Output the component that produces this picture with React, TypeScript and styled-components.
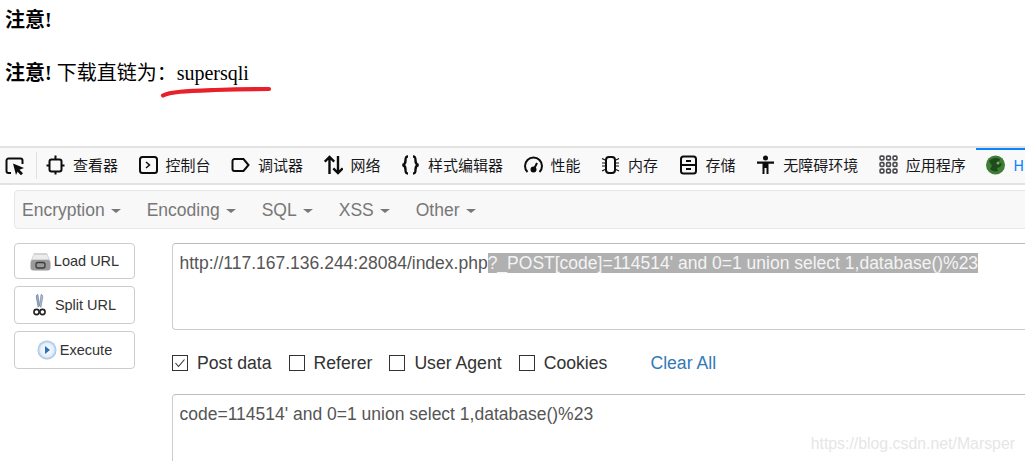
import React from 'react';
import styled, { createGlobalStyle } from 'styled-components';

const GlobalStyle = createGlobalStyle`
  html, body {
    margin: 0;
    padding: 0;
    background: #fff;
  }

  body {
    width: 1025px;
    height: 461px;
    overflow: hidden;
  }
`;

const Page = styled.div`
  position: relative;
  width: 1025px;
  height: 461px;
  overflow: hidden;
`;

const Notes = styled.div`
  height: 146px;
  box-sizing: border-box;
  padding: 7px 0 0 5px;
  font-family: 'Liberation Serif', 'Noto Sans CJK SC', serif;
  font-size: 20px;
  line-height: 26px;
  color: #000;
`;

const Note = styled.div`
  margin-bottom: 27px;
  white-space: nowrap;
`;

const Flag = styled.b`
  margin-right: 5px;
`;

const RedStroke = styled.svg`
  position: absolute;
  left: 158px;
  top: 84px;
`;

const Toolbar = styled.div`
  display: flex;
  align-items: stretch;
  height: 35px;
  border-top: 2px solid #e3e3e4;
  border-bottom: 2px solid #e3e3e4;
  background: #f9f9fa;
  font-family: 'Noto Sans CJK SC', 'Liberation Sans', sans-serif;
  font-size: 15px;
  color: #18181a;
  white-space: nowrap;
`;

const Picker = styled.div`
  display: flex;
  flex: none;
  align-items: center;
  width: 37px;
  padding-left: 5px;
  box-sizing: border-box;
  border-right: 1px solid #e0e0e2;
  margin: 4px 0;
`;

const Tabs = styled.div`
  display: flex;
  flex: none;
  gap: 20.5px;
  margin-left: 9px;
`;

const Tab = styled.div<{ $active?: boolean }>`
  display: flex;
  align-items: center;
  gap: 8px;
  padding-bottom: 1px;
  line-height: 20px;
  color: ${(p) => (p.$active ? '#0a84ff' : '#18181a')};
  position: relative;

  ${(p) =>
    p.$active &&
    `
    &::before {
      content: '';
      position: absolute;
      left: -10px;
      right: -30px;
      top: 0;
      height: 2px;
      background: #0a84ff;
    }
  `}
`;

const TabIcon = styled.svg`
  width: 19px;
  height: 20px;
  flex: none;
`;

const HackBar = styled.div`
  padding: 5px 0 0 14px;
  width: 1180px;
  font-family: 'Liberation Sans', Arial, sans-serif;
`;

const MenuBar = styled.div`
  display: flex;
  align-items: center;
  height: 39px;
  box-sizing: border-box;
  border: 1px solid #e7e7e7;
  border-radius: 4px;
  background: #f8f8f8;
  padding: 1px 0 0 7px;
  gap: 26px;
  font-size: 17.5px;
  color: #777;
`;

const MenuItem = styled.div`
  display: flex;
  align-items: center;
  gap: 6px;
`;

const Caret = styled.span`
  width: 0;
  height: 0;
  border-top: 4px solid #777;
  border-left: 5px solid transparent;
  border-right: 5px solid transparent;
  margin-top: 2px;
`;

const Workspace = styled.div`
  display: flex;
  margin-top: 14px;
  gap: 37px;
`;

const ActionColumn = styled.div`
  display: flex;
  flex-direction: column;
  width: 121px;
  flex: none;
  gap: 7px;
`;

const ActionButton = styled.div<{ $height: number; $gap: number }>`
  display: flex;
  align-items: center;
  justify-content: center;
  height: ${(p) => p.$height}px;
  box-sizing: border-box;
  border: 1px solid #ccc;
  border-radius: 4px;
  background: #fff;
  font-size: 14.5px;
  color: #333;
  gap: ${(p) => p.$gap}px;
`;

const Fields = styled.div`
  flex: 1;
  min-width: 0;
`;

const FieldBox = styled.div<{ $height: number }>`
  height: ${(p) => p.$height}px;
  box-sizing: border-box;
  border: 1px solid #ccc;
  border-top-color: #bbb;
  border-radius: 4px;
  padding: 9px 6.5px;
  font-size: 17.5px;
  line-height: 20px;
  color: #555;
  white-space: nowrap;
`;

const Selected = styled.span`
  background: #b0b0b0;
  color: #f4f4f4;
`;

const OptionRow = styled.div`
  display: flex;
  align-items: center;
  height: 64px;
  box-sizing: border-box;
  padding-top: 2px;
  font-size: 17.65px;
  color: #333;
`;

const Option = styled.label`
  display: flex;
  align-items: center;
  gap: 9px;
  margin-right: 17px;
`;

const Box = styled.span`
  display: flex;
  align-items: center;
  justify-content: center;
  width: 16px;
  height: 16px;
  box-sizing: border-box;
  border: 1px solid #333;
  background: #fff;
`;

const ClearAll = styled.span`
  margin-left: 26px;
  color: #337ab7;
`;

const Watermark = styled.div`
  position: absolute;
  right: 10px;
  top: 434px;
  font-family: 'Liberation Sans', Arial, sans-serif;
  font-size: 15.85px;
  line-height: 20px;
  color: #e6e6e6;
`;

const stroke = { fill: 'none', stroke: '#0c0c0d', strokeWidth: 2 };

const tabs = [
  {
    label: '查看器',
    icon: (
      <g {...stroke}>
        <rect x="3.500" y="4.500" width="12" height="12" rx="2" />
        <path d="M9.500 0.500v4M9.500 16.500v3M0.500 10.500h3M15.500 10.500h3" />
      </g>
    ),
  },
  {
    label: '控制台',
    icon: (
      <g {...stroke}>
        <rect x="1" y="2" width="17" height="16" rx="2.500" />
        <path d="M7 7l3.500 3L7 13" strokeWidth="1.500" />
      </g>
    ),
  },
  {
    label: '调试器',
    icon: <path {...stroke} d="M3.500 4h9l5 6-5 6h-9a2 2 0 0 1-2-2V6a2 2 0 0 1 2-2z" />,
  },
  {
    label: '网络',
    icon: (
      <g fill="none" stroke="#0c0c0d" strokeWidth="2.400">
        <path d="M5.500 19V2M0.800 6.700L5.500 2l4.700 4.700" />
        <path d="M14 1v17M9.300 13.300L14 18l4.700-4.700" />
      </g>
    ),
  },
  {
    label: '样式编辑器',
    icon: (
      <g fill="none" stroke="#0c0c0d" strokeWidth="2.400">
        <path d="M7 1.500c-2.500 0-2.500 1.500-2.500 4S4 9.500 1.500 10c2.500 .5 3 2 3 4.500s0 4 2.500 4" />
        <path d="M12 1.500c2.500 0 2.500 1.500 2.500 4s.5 4 3 4.500c-2.500 .5-3 2-3 4.500s0 4-2.500 4" />
      </g>
    ),
  },
  {
    label: '性能',
    icon: (
      <g {...stroke}>
        <path d="M3.500 17A8.500 8.500 0 1 1 15.500 17" />
        <circle cx="9.500" cy="14.500" r="2" fill="#0c0c0d" />
        <path d="M10 14l3-6" />
      </g>
    ),
  },
  {
    label: '内存',
    icon: (
      <g {...stroke}>
        <rect x="5" y="2" width="9" height="16" rx="3" />
        <path
          d="M4 5L1 3.500M4 8H1M4 11H1M4 14.500L1 16M15 5l3-1.500M15 8h3M15 11h3M15 14.500l3 1.500"
          strokeWidth="1.200"
        />
      </g>
    ),
  },
  {
    label: '存储',
    icon: (
      <g {...stroke}>
        <rect x="2" y="1.500" width="15" height="17" rx="2.500" />
        <path d="M2 10h15M7 6h5M7 14h5" />
      </g>
    ),
  },
  {
    label: '无障碍环境',
    icon: (
      <g fill="#0c0c0d">
        <circle cx="9.500" cy="3" r="2.500" />
        <path d="M1 6.500h17v2.300h-5.500V19h-2v-6h-2v6h-2V8.800H1z" />
      </g>
    ),
  },
  {
    label: '应用程序',
    icon: (
      <g fill="none" stroke="#4a4a4f" strokeWidth="1.600">
        {[3, 9.500, 16].map((y) =>
          [3, 9.500, 16].map((x) => (
            <rect key={`${x}-${y}`} x={x - 1.900} y={y - 1.900} width="3.800" height="3.800" rx="1" />
          )),
        )}
      </g>
    ),
  },
];

const PickerIcon = () => (
  <svg width="20" height="20" viewBox="0 0 20 20">
    <path d="M6 17H3.500A2 2 0 0 1 1.500 15V4.500a2 2 0 0 1 2-2h12a2 2 0 0 1 2 2V8" fill="none" stroke="#0c0c0d" strokeWidth="2" />
    <path d="M8 7.500l11 4.500-4.500 1.700 3.500 3.500-2 2-3.500-3.500L11 19z" fill="#0c0c0d" />
  </svg>
);

const HackBarLogo = () => (
  <svg width="19" height="20" viewBox="0 0 19 20">
    <circle cx="9.500" cy="10" r="9.500" fill="#3f7d36" />
    <path d="M3 6c3-3 7-4 11-2l-1 3 3 2-2 3-3 1 1 3c-3 1-6 0-8-2l2-3-3-5z" fill="#1e4a1c" />
    <circle cx="12" cy="8" r="1.500" fill="#77b35d" />
  </svg>
);

const DriveIcon = () => (
  <svg width="21" height="19" viewBox="0 0 21 19">
    <path d="M4 1h13l3.500 8H0.500z" fill="#d4d4d4" />
    <path d="M4 3h13l1.500 4H2.500z" fill="#ececec" />
    <rect x="0.500" y="8" width="20" height="10.500" rx="3" fill="#9a9a9a" />
    <rect x="6" y="10.500" width="9" height="5.500" rx="2" fill="none" stroke="#3c3c3c" strokeWidth="1.300" />
  </svg>
);

const ScissorsIcon = () => (
  <svg width="13" height="25" viewBox="0 0 14 24">
    <path d="M5.500 14L3.500 3c0-2 1-3 1.800-3L7 12z" fill="#8fb0d2" stroke="#557" strokeWidth=".5" />
    <path d="M8.500 14l2-11c0-2-1-3-1.800-3L7 12z" fill="#a8c4e0" stroke="#557" strokeWidth=".5" />
    <circle cx="3.800" cy="19" r="2.800" fill="none" stroke="#222" strokeWidth="1.700" />
    <circle cx="10.200" cy="19" r="2.800" fill="none" stroke="#222" strokeWidth="1.700" />
  </svg>
);

const PlayIcon = () => (
  <svg width="20" height="20" viewBox="0 0 20 20">
    <defs>
      <radialGradient id="playGlow" cx="50%" cy="50%" r="50%">
        <stop offset="0%" stopColor="#ffffff" />
        <stop offset="70%" stopColor="#e3eefa" />
        <stop offset="100%" stopColor="#9cbde3" />
      </radialGradient>
    </defs>
    <circle cx="10" cy="10" r="9.500" fill="url(#playGlow)" />
    <path d="M8 6l5 4-5 4z" fill="#2f6db5" />
  </svg>
);

const CheckOption = ({ label, checked }: { label: string; checked?: boolean }) => (
  <Option>
    <Box>
      {checked && (
        <svg width="12" height="12" viewBox="0 0 12 12">
          <path d="M1.500 6l3 3.500 6-7" fill="none" stroke="#333" strokeWidth="1.100" />
        </svg>
      )}
    </Box>
    {label}
  </Option>
);

const App: React.FC = () => {
  return (
    <Page>
      <GlobalStyle />

      <Notes>
        <Note>
          <b>注意!</b>
        </Note>
        <Note>
          <Flag>注意!</Flag>
          下载直链为：supersqli
        </Note>
      </Notes>

      <RedStroke width="120" height="20" viewBox="0 0 120 20">
        <path
          d="M5 11.500C12 7.500 30 7 57 6S105 5 111 5"
          fill="none"
          stroke="#e7202a"
          strokeWidth="4.200"
          strokeLinecap="round"
        />
      </RedStroke>

      <Toolbar>
        <Picker>
          <PickerIcon />
        </Picker>
        <Tabs>
          {tabs.map((tab) => (
            <Tab key={tab.label}>
              <TabIcon viewBox="0 0 19 20">{tab.icon}</TabIcon>
              {tab.label}
            </Tab>
          ))}
          <Tab $active>
            <HackBarLogo />H
          </Tab>
        </Tabs>
      </Toolbar>

      <HackBar>
        <MenuBar>
          {['Encryption', 'Encoding', 'SQL', 'XSS', 'Other'].map((item) => (
            <MenuItem key={item}>
              {item}
              <Caret />
            </MenuItem>
          ))}
        </MenuBar>

        <Workspace>
          <ActionColumn>
            <ActionButton $height={36} $gap={3}>
              <DriveIcon />
              Load URL
            </ActionButton>
            <ActionButton $height={38} $gap={9}>
              <ScissorsIcon />
              Split URL
            </ActionButton>
            <ActionButton $height={38} $gap={3}>
              <PlayIcon />
              Execute
            </ActionButton>
          </ActionColumn>

          <Fields>
            <FieldBox $height={87}>
              http://117.167.136.244:28084/index.php
              <Selected>?_POST[code]=114514' and 0=1 union select 1,database()%23</Selected>
            </FieldBox>

            <OptionRow>
              <CheckOption label="Post data" checked />
              <CheckOption label="Referer" />
              <CheckOption label="User Agent" />
              <CheckOption label="Cookies" />
              <ClearAll>Clear All</ClearAll>
            </OptionRow>

            <FieldBox $height={87}>code=114514' and 0=1 union select 1,database()%23</FieldBox>
          </Fields>
        </Workspace>
      </HackBar>

      <Watermark>https://blog.csdn.net/Marsper</Watermark>
    </Page>
  );
};

export default App;
